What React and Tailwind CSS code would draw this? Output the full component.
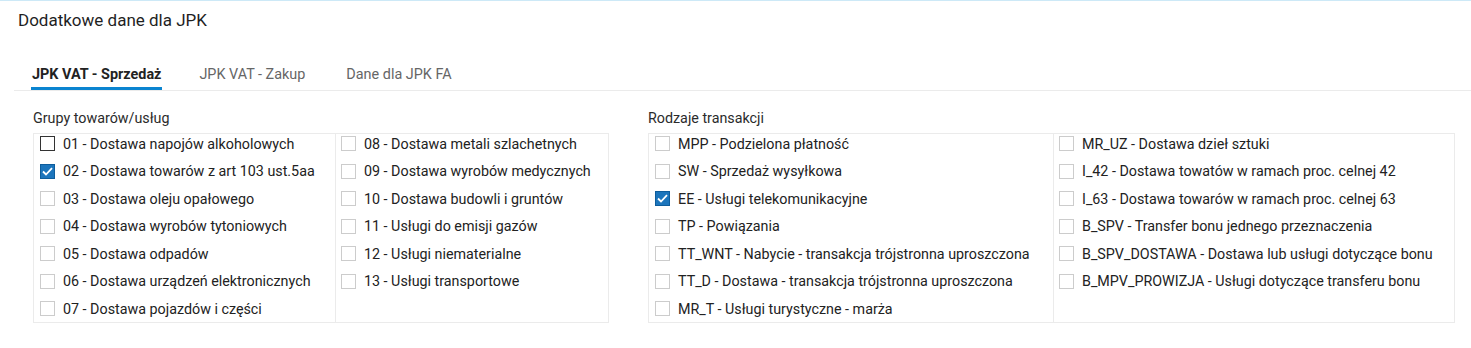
import { useState } from "react";

const GROUPS_LEFT = [
  "01 - Dostawa napojów alkoholowych",
  "02 - Dostawa towarów z art 103 ust.5aa",
  "03 - Dostawa oleju opałowego",
  "04 - Dostawa wyrobów tytoniowych",
  "05 - Dostawa odpadów",
  "06 - Dostawa urządzeń elektronicznych",
  "07 - Dostawa pojazdów i części",
];

const GROUPS_RIGHT = [
  "08 - Dostawa metali szlachetnych",
  "09 - Dostawa wyrobów medycznych",
  "10 - Dostawa budowli i gruntów",
  "11 - Usługi do emisji gazów",
  "12 - Usługi niematerialne",
  "13 - Usługi transportowe",
];

const TRANS_LEFT = [
  "MPP - Podzielona płatność",
  "SW - Sprzedaż wysyłkowa",
  "EE - Usługi telekomunikacyjne",
  "TP - Powiązania",
  "TT_WNT - Nabycie - transakcja trójstronna uproszczona",
  "TT_D - Dostawa - transakcja trójstronna uproszczona",
  "MR_T - Usługi turystyczne - marża",
];

const TRANS_RIGHT = [
  "MR_UZ - Dostawa dzieł sztuki",
  "I_42 - Dostawa towatów w ramach proc. celnej 42",
  "I_63 - Dostawa towarów w ramach proc. celnej 63",
  "B_SPV - Transfer bonu jednego przeznaczenia",
  "B_SPV_DOSTAWA - Dostawa lub usługi dotyczące bonu",
  "B_MPV_PROWIZJA - Usługi dotyczące transferu bonu",
];

function CheckRow({ label, checked, focused, onToggle }) {
  return (
    <button type="button" onClick={onToggle} className="flex h-[27.5px] w-full items-center text-left">
      <span
        className={[
          "inline-flex h-[15px] w-[15px] shrink-0 items-center justify-center border",
          checked
            ? "border-[#0e5d9c] bg-[#1c75bc]"
            : focused
            ? "border-[#333333] bg-white"
            : "border-[#cccccc] bg-white",
        ].join(" ")}
      >
        {checked ? (
          <svg width="11" height="9" viewBox="0 0 11 9" fill="none">
            <path d="M1 4.5 L4 7.5 L10 1.2" stroke="white" strokeWidth="1.8" />
          </svg>
        ) : null}
      </span>
      <span className="ml-[8px] whitespace-nowrap text-[14.3px] leading-[20px] text-[#222222]">{label}</span>
    </button>
  );
}

function Column({ items, state, toggle, width, pad, divider }) {
  return (
    <div className={`${width} ${pad} ${divider ? "border-r border-[#ebebeb]" : ""} shrink-0`}>
      <div className="-mt-[4px]">
        {items.map((label) => (
          <CheckRow
            key={label}
            label={label}
            checked={!!state[label]}
            focused={label.startsWith("01 ")}
            onToggle={() => toggle(label)}
          />
        ))}
      </div>
    </div>
  );
}

export default function App() {
  const [tab, setTab] = useState(0);
  const [state, setState] = useState({
    "02 - Dostawa towarów z art 103 ust.5aa": true,
    "EE - Usługi telekomunikacyjne": true,
  });
  const toggle = (label) => setState((s) => ({ ...s, [label]: !s[label] }));
  const tabs = ["JPK VAT - Sprzedaż", "JPK VAT - Zakup", "Dane dla JPK FA"];

  return (
    <div className="h-[348px] w-full overflow-hidden border-t border-[#cde9f7] bg-white font-['Roboto',sans-serif]">
      <div className="pl-[18px] pt-[9px] text-[17px] leading-[20px] text-[#1f1f1f]">Dodatkowe dane dla JPK</div>

      <div className="mt-[35px] flex border-b border-[#ebebeb] pl-[13px] ml-[14px]">
        {tabs.map((t, i) => (
          <button
            key={t}
            type="button"
            onClick={() => setTab(i)}
            className={["px-[19px] first:pl-[5px]", i === 1 ? "mr-[3px]" : ""].join(" ")}
          >
            <span
              className={[
                "-mx-px block px-px pb-[2px] text-[14.4px] leading-[20px]",
                tab === i
                  ? "border-b-[3px] border-[#0a84d0] font-bold text-[#222222]"
                  : "border-b-[3px] border-transparent text-[#666666]",
              ].join(" ")}
            >
              {t}
            </span>
          </button>
        ))}
      </div>

      <div className="ml-[33px] mt-[17px] flex gap-[39px]">
        <div>
          <div className="text-[14.3px] leading-[20px] text-[#2b2b2b]">Grupy towarów/usług</div>
          <div className="mt-[5px] flex h-[190px] border border-[#ebebeb]">
            <Column items={GROUPS_LEFT} state={state} toggle={toggle} width="w-[302px]" pad="pl-[6px]" divider />
            <Column items={GROUPS_RIGHT} state={state} toggle={toggle} width="w-[272px]" pad="pl-[5px]" />
          </div>
        </div>
        <div>
          <div className="text-[14.3px] leading-[20px] text-[#2b2b2b]">Rodzaje transakcji</div>
          <div className="mt-[5px] flex h-[190px] border border-[#ebebeb]">
            <Column items={TRANS_LEFT} state={state} toggle={toggle} width="w-[405px]" pad="pl-[6px]" divider />
            <Column items={TRANS_RIGHT} state={state} toggle={toggle} width="w-[400px]" pad="pl-[5px]" />
          </div>
        </div>
      </div>
    </div>
  );
}
